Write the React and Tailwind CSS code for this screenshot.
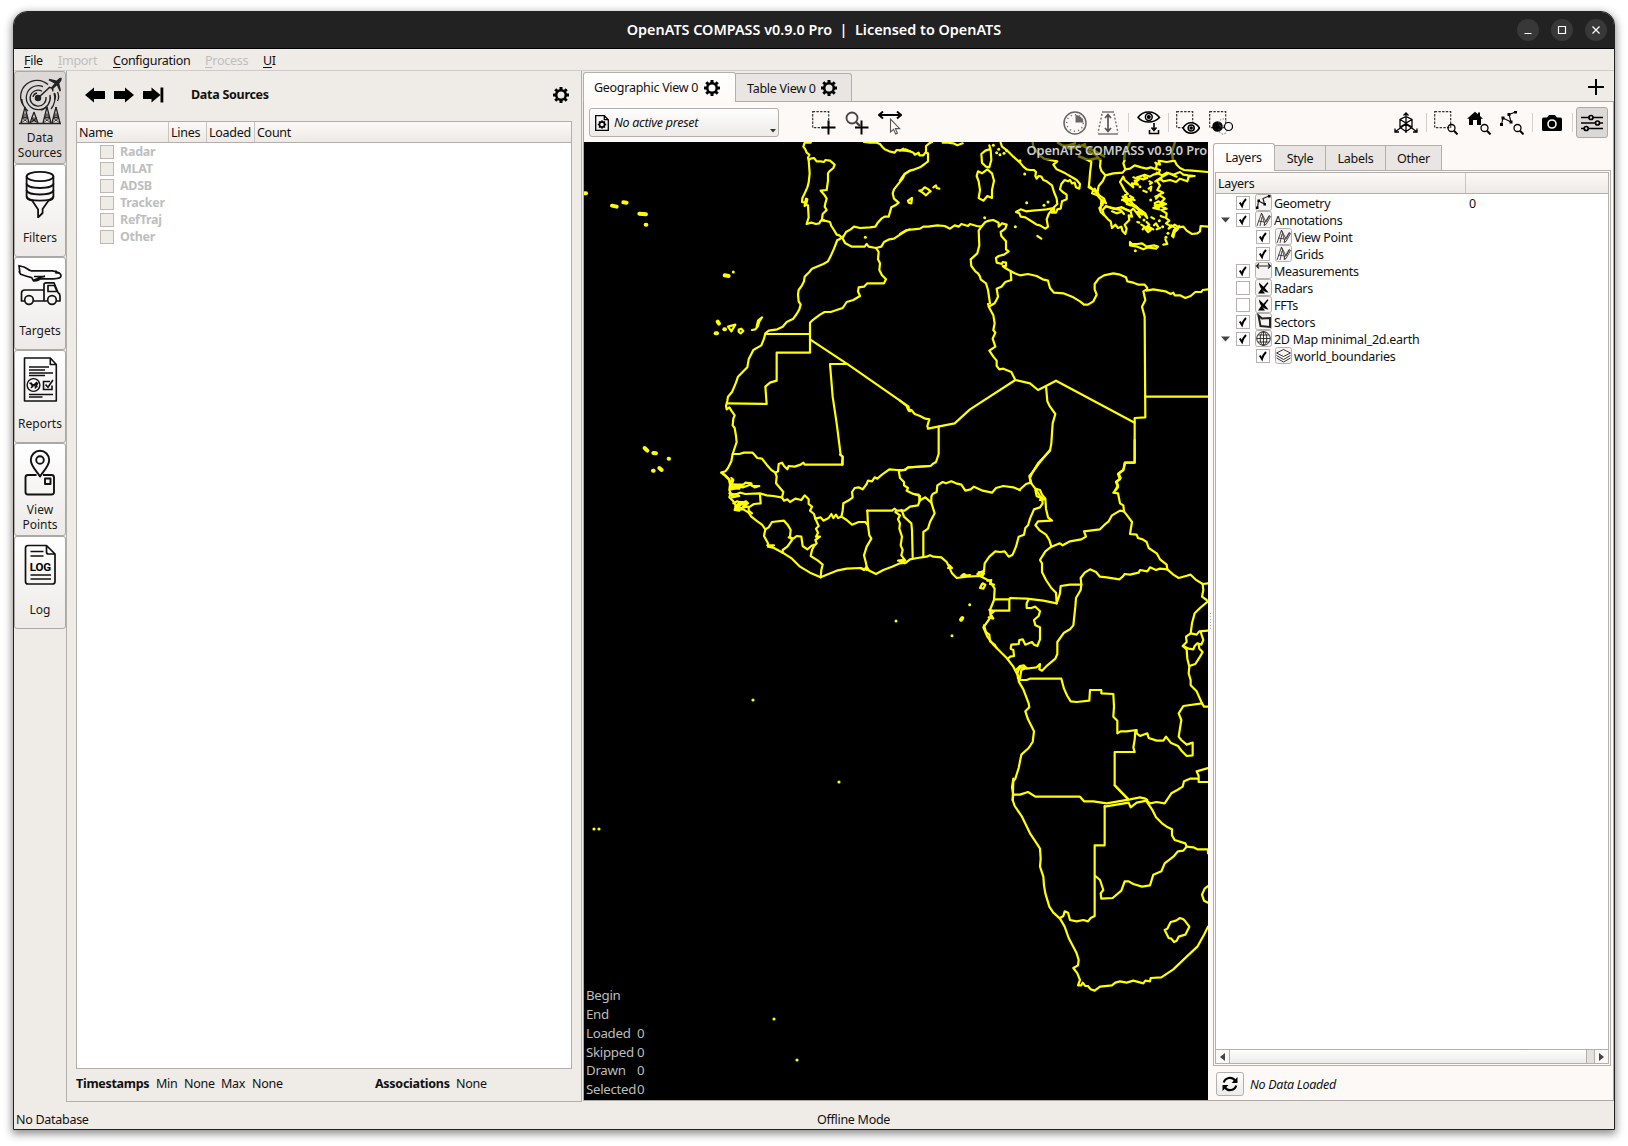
import React from "react";

function Gear({ className = "" }) {
  return (
    <svg viewBox="0 0 16 16" className={"h-4 w-4 shrink-0 " + className}>
      <circle cx="8" cy="8" r="4.8" fill="none" stroke="#000" strokeWidth="2.6" />
      <g stroke="#000" strokeWidth="3">
        <path d="M8 0v3M8 13v3M0 8h3M13 8h3" />
        <path d="M2.3 2.3l2 2M11.7 11.7l2 2M2.3 13.7l2-2M11.7 4.3l2-2" />
      </g>
    </svg>
  );
}

/* ---------- sidebar drawings, each on a 46x48 canvas ---------- */

const tower = (x, top) => (
  <g key={x}>
    <path d={`M${x} ${top}L${x - 4} 46M${x} ${top}L${x + 4} 46`} strokeWidth="1.3" />
    <path
      d={`M${x - 1.5} ${top + 6}L${x + 2.5} ${top + 10}L${x - 3} 41L${x + 4} 46M${x + 1.5} ${top + 6}L${x - 2.5} ${top + 10}L${x + 3} 41L${x - 4} 46M${x - 2} ${top + 9}H${x + 2}M${x - 3} 41H${x + 3}`}
      strokeWidth="0.8"
    />
  </g>
);

function SourcesIcon() {
  return (
    <svg viewBox="0 0 46 48" className="h-12 w-[46px]" fill="none" stroke="#222" strokeWidth="1.3">
      <circle cx="21" cy="21" r="2.6" fill="#222" />
      <path d="M21 21L33 10" strokeWidth="1.6" />
      <path d="M25 14.2A8 8 0 1 0 29 20M26 9.6A12 12 0 1 0 33 18c1 7-3 14-9 15M31 7.6A16.3 16.3 0 0 0 6 28M4.800 22A16.400 16.400 0 0 0 11 34M37 16a17 17 0 0 1-3 16M16 20a5 5 0 0 1 4-4" />
      <path d="M37.500 16c1.200 2 1.200 5 0 7M40.500 15c1.500 3 1.500 6 0 9" />
      <path d="M44.500 .8c-2-.8-4 2-5 2.800l-7-1.800-1 1.500 6 3.200-3 3.500-2.500-.3-.5 1 3 1 1 3 1-.5v-2.800l3.400-3 2.800 6.400 1.300-1.200-1.700-7.200c1-1 3-3.600 2.200-5.600z" fill="#222" stroke="none" />
      {tower(8, 30)}
      {tower(17, 35)}
      {tower(30, 30)}
      {tower(39, 30)}
      <path d="M2 46.500H44" strokeWidth="1.6" />
    </svg>
  );
}

function FunnelIcon() {
  return (
    <svg viewBox="0 0 46 48" className="h-12 w-[46px]" fill="none" stroke="#111" strokeWidth="1.8" strokeLinejoin="round">
      <ellipse cx="23" cy="6.500" rx="13.400" ry="4.700" />
      <path d="M9.600 6.500v20c0 2 2.500 3.500 5.500 4l6 9v8l4.500-4.500v-4l6-8.500c3-.5 4.800-2 4.800-4v-20" />
      <path d="M9.600 13.500c0 6 26.800 6 26.800 0M9.600 20c0 6 26.800 6 26.800 0M9.600 26.500c2 5.500 24.800 5.500 26.800 0" />
    </svg>
  );
}

function TargetsIcon() {
  return (
    <svg viewBox="0 0 46 48" className="h-12 w-[46px]" fill="none" stroke="#111" strokeWidth="1.700" strokeLinejoin="round">
      <path d="M5 3.500l-3-.8.800 5.800-.6.300 1.500 2.500c4 1.500 8 2.700 11 3.300l1.800 3.200c3 .3 5-.5 7-2h13c3 0 7.500-.5 7.500-3s-4-4.300-8.500-5H14c-3-.8-6-4.300-9-4.300z" />
      <path d="M16 17.500c3-1 7-4 12-4M19 17l9-4M39 7.500v2.500h4M17 13.500h10" />
      <path d="M8 38H4.500v-8c0-2 1.500-3 3.500-3h19v-5.500c0-1 1-1.700 2-1.700h8l4 9.700c1.500 1 2 2 2 3.500v5h-4M16 38h14M27 27v11M31 23v5.500h9l-2.500-6H31z" />
      <circle cx="12" cy="37" r="4.300" />
      <circle cx="35" cy="37" r="4.300" />
    </svg>
  );
}

function ReportIcon() {
  return (
    <svg viewBox="0 0 46 48" className="h-12 w-[46px]" fill="none" stroke="#111" strokeWidth="1.400">
      <path d="M7.500 2h25.800l6 6.500V45H7.500zM33.300 2v6.500h6" strokeWidth="1.600" strokeLinejoin="round" />
      <path d="M12 11h20M12 14h16M12 17h24M12 19.500h16M12 38.500h24M12 41h13.500" />
      <circle cx="16.500" cy="29" r="6.400" />
      <path d="M12.500 27l8 4M20 26l-6 6M14 26.500l1 3 5.500-2-2.500 5" strokeWidth="1.500" />
      <path d="M33 25.500h-6.500v8H35v-4M28.500 28.500l2.500 2.800L36 24" strokeWidth="1.600" />
    </svg>
  );
}

function ViewPointIcon() {
  return (
    <svg viewBox="0 0 46 48" className="h-12 w-[46px]" fill="none" stroke="#111" strokeWidth="1.900" strokeLinejoin="round">
      <path d="M19.500 26H11c-1.500 0-2.500 1-2.500 2.500V43c0 1.500 1 2.500 2.500 2.500h23.500c1.500 0 2.500-1 2.500-2.500V28.500c0-1.500-1-2.500-2.500-2.500H26" />
      <path d="M23 27.500c-2-4-9.200-10-9.200-16.500a9.200 9.200 0 0 1 18.400 0c0 6.500-7.200 12.500-9.200 16.500z" />
      <circle cx="23" cy="11" r="3.800" />
      <path d="M28 29.500h5.500v5.500H28z" />
    </svg>
  );
}

function LogIcon() {
  return (
    <svg viewBox="0 0 46 48" className="h-12 w-[46px]">
      <g fill="none" stroke="#111" strokeWidth="1.700" strokeLinejoin="round">
        <path d="M29.500 3.500H11c-1.500 0-2.500 1-2.500 2.500v33.500c0 1.500 1 2.500 2.500 2.500h24.500c1.500 0 2.500-1 2.500-2.500V12z M29.500 3.500V10c0 1.500.8 2 2 2H38" />
        <path d="M13.500 9.500h13M13.500 14h13M13.500 33h20.500M13.500 37h20.500" />
      </g>
      <text x="23.300" y="28.500" textAnchor="middle" fontFamily="Roboto, sans-serif" fontWeight="700" fontSize="11.500" letterSpacing="-0.100">
        LOG
      </text>
    </svg>
  );
}

const SIDE = [
  { label: ["Data", "Sources"], Icon: SourcesIcon, active: true },
  { label: ["Filters"], Icon: FunnelIcon },
  { label: ["Targets"], Icon: TargetsIcon },
  { label: ["Reports"], Icon: ReportIcon },
  { label: ["View", "Points"], Icon: ViewPointIcon },
  { label: ["Log"], Icon: LogIcon },
];

function Sidebar() {
  return (
    <nav className="w-[52px] shrink-0">
      {SIDE.map(({ label, Icon, active }) => (
        <button
          key={label[0]}
          className={
            "flex h-[93px] w-[52px] flex-col items-center rounded-[3px] border border-[#aca8a5] pt-[5px] text-[12px] leading-[15px] tracking-normal text-[#1a1a1a] " +
            (active ? "bg-[#dcd8d6]" : "bg-linear-to-b from-white to-[#edeae7]")
          }
        >
          <Icon />
          <span className="flex h-[34px] flex-col justify-center pt-[5px]">
            {label.map((l) => (
              <span key={l} className="block text-center">
                {l}
              </span>
            ))}
          </span>
        </button>
      ))}
    </nav>
  );
}

/* ---------- left panel ---------- */

const COLS = [
  ["Name", "w-[92px]"],
  ["Lines", "w-[38px]"],
  ["Loaded", "w-[48px]"],
];

function SourcesPanel() {
  return (
    <section className="flex w-[516px] shrink-0 flex-col border-x border-b border-[#b3afac] pr-[9px] pl-[9px]">
      <div className="flex h-[50px] items-center pb-[2px] pl-[9px]">
        <svg viewBox="0 0 80 16" className="h-4 w-20">
          <path d="M0 8l9-7.500V4h11v8H9v3.500zM49 8l-9-7.500V4H29v8h11v3.500zM58 4h8.500V.5L75.500 8l-9 7.500V12H58zM75.500.5H78.300v15h-2.800z" />
        </svg>
        <span className="ml-[26px] font-bold">Data Sources</span>
        <Gear className="mr-[3px] ml-auto" />
      </div>
      <div className="flex flex-1 flex-col border border-[#b3afac] bg-white">
        <div className="flex h-[21px] border-b border-[#b3afac] bg-linear-to-b from-[#fdf9f6] to-[#edeae6] leading-[21px]">
          {COLS.map(([c, w]) => (
            <div key={c} className={w + " border-r border-[#c9c5c2] pl-[2px]"}>
              {c}
            </div>
          ))}
          <div className="pl-[2px]">Count</div>
        </div>
        <div className="pl-[23px]">
          {["Radar", "MLAT", "ADSB", "Tracker", "RefTraj", "Other"].map((r) => (
            <div key={r} className="flex h-[17px] items-center font-bold text-[#bebebe]">
              <i className="mr-[6px] h-[14px] w-[14px] border border-[#bcb8b4] bg-[#efebe7]" />
              <span className="pt-[2px]">{r}</span>
            </div>
          ))}
        </div>
      </div>
      <div className="flex h-[32px] items-center pb-[1px] whitespace-nowrap">
        <b className="w-[80px]">Timestamps</b>
        <span className="w-[28px]">Min</span>
        <span className="w-[37px]">None</span>
        <span className="w-[31px]">Max</span>
        <span className="w-[123px]">None</span>
        <b className="w-[81px]">Associations</b>
        <span>None</span>
      </div>
    </section>
  );
}

/* ---------- toolbar ---------- */

function Tool({ children, className = "" }) {
  return (
    <svg viewBox="0 0 24 24" fill="none" stroke="#000" strokeWidth="1.500" className={"h-6 w-6 shrink-0 " + className}>
      {children}
    </svg>
  );
}
const Sep = ({ className }) => <i className={"h-[19px] w-px shrink-0 bg-[#d3cfcc] " + className} />;
const Dashed = ({ s = 16 }) => (
  <rect x=".7" y=".7" width={s} height={s} stroke="#333" strokeWidth="1.200" strokeDasharray="2.400 1.300" />
);
const Lens = () => (
  <g>
    <circle cx="17.500" cy="17" r="3.500" strokeWidth="1.300" />
    <path d="M20 19.700l3.500 3.700" strokeWidth="2" />
  </g>
);

function Toolbar() {
  return (
    <div className="flex h-10 items-center pt-px pl-[5px]">
      <div className="flex h-[29px] w-[190px] items-center rounded-[3px] border border-[#b3afac] bg-linear-to-b from-white to-[#edeae7] pl-[5px]">
        <svg viewBox="0 0 14 16" className="h-4 w-[14px]" fill="none" stroke="#000" strokeWidth="1.300">
          <path d="M.7.700h8.600l4 4v10.600H.7zM9.300.7v4h4" />
          <circle cx="7" cy="9.500" r="2.600" strokeWidth="1.700" />
          <path d="M7 5.300v1.500M7 12.200v1.500M2.800 9.500h1.500M9.700 9.500h1.500M4 6.500l1 1M9 11.500l1 1M4 12.500l1-1M9 7.500l1-1" />
        </svg>
        <span className="ml-[5px] pt-px italic">No active preset</span>
        <svg viewBox="0 0 6 4" className="mt-[17px] mr-[2px] ml-auto h-[4px] w-[6px]">
          <path d="M0 0h6L3 3.500z" fill="#333" />
        </svg>
      </div>

      <Tool className="ml-[33px]">
        <Dashed />
        <path d="M16.500 9.500v14M9.500 16.500h14" strokeWidth="2" />
      </Tool>
      <Tool className="ml-[9px]">
        <circle cx="7" cy="7" r="5.500" stroke="#444" strokeWidth="1.800" />
        <path d="M11 11l4 4" stroke="#444" strokeWidth="2.400" />
        <path d="M16.500 9.500v14M10 16.500h13.500" strokeWidth="2" />
      </Tool>
      <Tool className="ml-[9px]">
        <path d="M1 4h22M5 .5L1 4l4 3.500M19 .5L23 4l-4 3.500" strokeWidth="1.900" />
        <path d="M12.500 8v13l3-2.700 2.200 4.700 1.700-.8-2-4.600h4.300z" stroke="#555" strokeWidth="1.100" fill="#fdf9f6" />
      </Tool>

      <Tool className="ml-[161px]">
        <circle cx="12" cy="12" r="11" stroke="#666" />
        <path d="M12.500 11.500V4a8 8 0 0 1 8 7.500z" fill="#666" stroke="none" />
        <circle cx="12" cy="12" r="8.300" stroke="#777" strokeWidth="1.400" strokeDasharray="1.300 3" />
      </Tool>
      <Tool className="ml-[9px]">
        <path d="M6 1h12M2 23h20" stroke="#777" />
        <path d="M6 3L2 22M18 3l4 19" stroke="#777" strokeDasharray="2 1.800" />
        <path d="M12 3v18M9 7l3-3.500L15 7M9 17l3 3.500 3-3.500" stroke="#555" strokeWidth="1.700" />
      </Tool>
      <Sep className="ml-[8px]" />
      <Tool className="ml-[8px]">
        <path d="M1 6.500C6-1 17-1 22.500 6.500 17 12.500 6 12.500 1 6.500z" strokeWidth="1.500" />
        <circle cx="11.800" cy="6" r="3.400" strokeWidth="1.500" />
        <circle cx="11.800" cy="6" r="1.300" fill="#000" />
        <path d="M17 12v7M14.500 16.500l2.500 3 2.500-3M12.500 19v3.500h9V19" strokeWidth="1.600" />
      </Tool>
      <Sep className="ml-[7px]" />
      <Tool className="ml-[7px]">
        <Dashed />
        <path d="M7 17c4-7 12-7 16.500 0-4.500 7-12.500 7-16.500 0z" fill="#fdf9f6" strokeWidth="1.600" />
        <circle cx="15.200" cy="17" r="3" strokeWidth="1.600" />
        <circle cx="15.200" cy="17" r="1" fill="#000" />
      </Tool>
      <Tool className="ml-[9px]">
        <Dashed />
        <circle cx="8.500" cy="15.500" r="4.500" fill="#000" />
        <circle cx="14" cy="19" r="4" stroke="#555" strokeWidth="1" strokeDasharray="1.500 1.500" />
        <circle cx="14" cy="12" r="4" stroke="#777" strokeWidth="1" strokeDasharray="1.500 1.500" />
        <circle cx="19.500" cy="15.500" r="4" fill="#fdf9f6" strokeWidth="1.200" />
      </Tool>

      <Tool className="ml-[161px]">
        <path d="M12 2v20M6 8.500v8l6 4 6-4v-8l-6-3zM6 8.500l6 3.500 6-3.500M6 16l6-3.500 6 3.500M1.500 20.500L12 13l10.500 7.500M1 17.500v3.500h4M23 17.500v3.500h-4M9.500 4.500L12 2l2.500 2.500" strokeWidth="1.300" />
      </Tool>
      <Sep className="ml-[8px]" />
      <Tool className="ml-[7px]">
        <Dashed />
        <Lens />
      </Tool>
      <Tool className="ml-[9px]">
        <path d="M8 .8L0 7.800h2V14h4V9h4v5h4V7.800h2L13 5V1.500h-2V3.200z" fill="#000" stroke="none" />
        <Lens />
      </Tool>
      <Tool className="ml-[9px]">
        <path d="M1.500 13.500L3 7l8 4L9 3.500 15.500 1" strokeWidth="1.100" />
        <path d="M0 12h3v3H0zM1.500 5.500h3v3h-3zM9.500 9.500h3v3h-3zM7.500 2h3v3h-3zM14 0h3v2.500h-3z" fill="#000" stroke="none" />
        <Lens />
      </Tool>
      <Sep className="ml-[8px]" />
      <svg viewBox="0 0 20 16" className="ml-[9px] h-4 w-5 shrink-0">
        <path d="M1.500 2.500H5L7 0h6l2 2.500h3.500A1.500 1.500 0 0 1 20 4v10.500a1.500 1.500 0 0 1-1.500 1.500h-17A1.500 1.500 0 0 1 0 14.500V4a1.500 1.500 0 0 1 1.500-1.500z" />
        <circle cx="10" cy="9" r="4" fill="none" stroke="#fdf9f6" strokeWidth="1.600" />
      </svg>
      <Sep className="ml-[10px]" />
      <div className="ml-[3px] flex h-[31px] w-[32px] items-center justify-center rounded-[3px] border border-[#aca8a5] bg-[#dcd8d6]">
        <svg viewBox="0 0 22 18" className="h-[18px] w-[22px]" fill="none" stroke="#000" strokeWidth="1.700">
          <path d="M0 3.500h8M12 3.500h10M0 9h14M18.500 9H22M0 14.500h3M7.500 14.500H22" />
          <circle cx="10" cy="3.500" r="2" />
          <circle cx="16.500" cy="9" r="2" />
          <circle cx="5.200" cy="14.500" r="2" />
        </svg>
      </div>
    </div>
  );
}

/* ---------- map: line work is stored in thirds of a pixel, one group per sheet ---------- */

const SHEETS = [
  {
    x: 570,
    y: 130,
    lines: [
      "722,38 704,38 700,50 706,58 710,68 718,74 714,84 716,90 719,130 716,158 712,172 704,190 697,205 696,216 706,218 704,228 708,206 712,208 708,225 714,226 716,262 710,282 724,278 738,282 748,280 752,272 764,272 780,276 784,288 792,300 800,314 808,316 818,324 828,306 842,298 852,290 870,294 900,292 916,290 922,280 934,266 944,260 956,260 964,232 976,226 986,218 972,206 968,190 972,178 988,158 998,146 1004,132 1020,122",
      "716,90 722,86 732,84 740,94 752,94 762,96 766,90 780,92 794,104 790,114 778,124 774,130 774,152 770,180 752,182 764,196 770,206 766,220 764,230 770,240 758,252 756,268 764,272",
      "882,36 900,38 920,38 930,42 938,52 944,58 958,64 974,68 980,60 1002,62 1006,58 1020,64",
      "818,320 808,328 802,330 792,356 784,374 774,394 760,402 726,416 718,426 704,440 702,454 696,466 686,480 684,494 686,514 692,524 688,538 680,552 670,566 650,576 638,590 622,598 596,602 586,610 582,626 574,646 550,660 544,672 536,688 532,712 520,724 504,740 498,758 492,772 486,786 474,800 472,812 468,828 470,838 478,832 484,842 494,856 490,866 488,886 494,894 498,918 500,936 492,960 488,972 484,994 474,1014 466,1024 454,1028 464,1034 478,1048 480,1060 488,1048",
      "818,326 826,340 846,350 866,350 884,350 890,342 896,350 918,354 934,350 942,336 958,328 972,326 990,314 1006,304 1020,298",
      "918,354 926,366 924,388 930,400 928,420 936,436 948,448 942,460 892,460 882,470 866,472 864,484 870,498 850,510 830,516 818,534 800,540 782,546 764,546 750,554 726,572 720,578 720,668 620,668 620,752 600,758 586,770 590,822 472,820",
      "586,612 720,612",
      "720,628 838,706 1016,830 1016,842 1020,844",
      "832,702 780,702 788,800 800,880 812,974 818,980 816,1004",
      "474,590 496,584 484,604 474,590",
      "506,599 514,596 520,603 512,610 506,605 506,599",
      "546,600 556,598 564,588 568,574 576,562 564,572 560,590",
    ],
    blobs: [
      "464,436 476,438",
      "126,227 140,230",
      "160,217 170,218",
      "208,251 228,253",
      "224,954 232,962",
      "250,969 258,970",
      "268,1014 275,1020",
      "443,575 447,581",
      "296,986 297,986",
      "249,1022 251,1022",
      "44,190 48,190",
      "227,284 229,284",
      "437,610 441,610",
      "463,598 465,598",
    ],
    dots: [[490, 426], [886, 322]],
  },
  {
    x: 900,
    y: 130,
    lines: [
      "0,152 6,142 14,132 30,122 44,118 60,112 74,102 84,94 84,70 78,68 78,48 88,40 96,36",
      "0,62 10,56 16,62 30,64 40,68 44,74 56,68 58,76 70,76 76,68",
      "128,38 144,38 160,40 172,46 188,40",
      "58,182 66,180 74,172 82,176 92,184 86,188 78,196 68,188 58,182",
      "100,172 108,166 110,174 118,176",
      "24,212 36,204 34,220 26,218 24,212",
      "268,46 272,60 274,90 268,112 258,110 246,98 244,72 256,62 268,58",
      "234,124 246,130 262,118 276,130 282,152 276,180 276,204 262,198 250,212 236,204 240,180 236,154 230,138 234,124",
      "302,38 306,50 322,62 340,80 360,98 370,110 380,118 390,120 402,120 408,126 406,138 410,146 416,138 424,140 430,150 440,154 456,166 462,186 470,206 472,222 462,232 462,242 456,248 468,248 472,238 482,236 486,214 500,208 500,194 488,186 480,178 484,162 494,150 504,154 510,150 516,160 524,158 528,172 538,176 540,162 530,150 520,144 496,130 480,122 470,118 460,104 472,94 432,86 424,80 410,64 400,50 398,38",
      "348,246 362,238 378,244 398,242 420,240 440,238 460,234 446,252 440,268 444,290 436,296 420,286 410,284 398,276 376,262 362,260 358,250 348,246",
      "412,318 424,326",
      "0,312 20,300 40,298 60,296 70,290 84,290 112,286 134,288 150,296 164,286 176,290 184,282 204,288 210,282 230,288 244,290 256,276 268,272 280,270 296,278 296,290 306,280 320,284 316,296 302,306 304,318 318,334 318,358 326,364 312,374 296,378 288,384 290,398 306,402 308,396 318,398 318,408 308,408 316,414 326,420 344,430 360,436 384,432 410,438 428,448 444,452 450,474 462,488 490,490 520,502 540,514 552,524 564,524 580,514 590,494 584,478 584,462 596,446 612,436 640,430 660,434 678,442 682,454 700,458 716,464 734,464 742,474 740,482 760,478 796,484 812,492 820,488 824,496 840,496 856,504 872,498 886,486 904,486 908,480 924,478",
      "244,290 236,302 238,346 232,370 212,388 214,408 226,424 234,430 240,440 242,448 258,460 264,480 270,520",
      "332,426 334,450 316,456 304,470 290,476 294,500 284,520 266,530",
      "264,522 268,534 280,556 284,580 280,600 286,608 278,626 286,650 268,662 280,680 290,692 290,708 298,718 310,716 334,726 346,750 390,760 414,780 438,768 468,752 704,878 704,998 676,998 670,1020 656,1030 662,1044 650,1054 654,1066 646,1080",
      "346,750 210,838 164,880 114,890 84,896 82,888 88,868 76,866 60,858 44,852 34,840 24,838 20,828 0,812",
      "116,890 116,972 108,996 98,1002 92,1008 24,1012 16,1020 0,1022",
      "438,768 442,814 450,830 466,852 458,880 454,940 450,962 414,1000 396,1030 390,1044 394,1060",
      "740,478 730,484 736,510 726,530 734,560 736,862 704,864 704,878",
      "736,800 924,800",
      "566,92 574,96 570,130 568,156 566,172 580,180 576,190 592,196 602,208 610,212 608,224 598,234 602,246 612,256 608,240 618,228 640,236 662,240 672,252",
      "570,170 590,190 584,176 598,196 612,206 618,220 604,212 602,240",
      "612,254 624,268 632,274 636,294 646,284 654,294 664,290 668,304 676,312 680,296 674,284 688,270 686,256 696,260 692,244 676,238 664,232 646,236 620,230",
      "664,232 690,244 700,236 720,262 712,246 726,254 716,240 700,224 690,214 676,206 666,210 680,202 674,196 684,192 676,184 668,170 660,156 670,140 674,150 688,162 700,172 696,160 714,164 704,152 716,150 712,142 734,134 750,140 760,134 776,130 780,120 766,116",
      "602,88 600,110 604,122 616,136 640,130 668,128 676,118 670,100 674,90",
      "616,136 608,154 596,168 592,190",
      "676,118 690,116 704,106 724,112 740,116 752,112 768,118 770,104 766,98 780,104 776,92 800,96 824,92 830,104 840,114 852,120 876,122 924,126",
      "770,128 786,136 800,128 820,134 840,126 850,134 864,136 884,138 866,140 862,154 840,146 828,156 810,150 790,154 780,146 766,154 784,142 806,130 830,140",
      "784,146 770,152 780,166 772,180 790,188 776,194 794,206 784,216 798,222 782,228 800,236 784,240 800,250 798,264 808,272 798,280 812,288 806,296 824,284 836,292 850,290 860,302 876,312 892,310 900,304 902,288 924,290",
      "764,220 776,214 788,224 776,232 764,226 780,224 760,234 778,238",
      "672,212 690,208 698,222 710,230 724,244 742,264 736,250 716,236 704,230 684,220 672,212",
      "690,198 700,204 688,208 704,210",
      "668,200 684,206 680,222 692,226",
      "740,276 748,284 738,292 752,300 744,306 734,294 746,290 760,298",
      "690,336 696,342 712,342 726,340 740,350 762,346 774,350 768,356 744,352 730,358 712,350 690,346 690,336",
      "790,344 802,342 796,328",
      "820,322 824,306 834,296 822,300 816,318",
      "814,286 832,298 820,310 838,288",
      "712,142 730,148 742,144 732,140",
      "700,142 716,148 704,160",
      "746,176 754,170 752,182",
      "768,206 778,196 766,200",
      "730,182 740,186",
      "724,284 734,290 728,298",
      "762,286 768,280 774,290",
      "770,298 780,294",
      "754,262 762,266",
      "712,276 718,278",
      "748,154 756,158 750,162",
      "782,258 792,262",
      "636,244 650,250 662,246",
    ],
    blobs: [],
    dots: [
      [346, 290], [254, 263], [374, 132], [380, 218], [432, 226], [444, 216], [280, 46], [296, 58], [312, 70], [320, 62], [290, 68], [300, 74], [360, 92], [706, 362],
      [752, 210], [778, 272], [804, 310], [798, 322], [720, 170], [732, 270], [788, 290],
    ],
  },
  {
    x: 700,
    y: 440,
    lines: [
      "64,98 76,108 88,120 90,134 88,150 92,160 88,172 100,184 106,194 110,208 130,208 146,218 154,230 172,244 186,254 196,268 192,288 204,310 204,320 222,324 248,338 276,356 300,380 330,398 362,412 380,404 410,392 440,386 480,384 504,390 528,402 550,390 576,380 600,370 618,368 630,358 652,354 680,350 690,346 700,350 724,352 740,366 748,382 756,400 770,414 800,410 840,408 856,416 870,424 884,446 882,480 870,510 872,530 866,540 850,562 862,590 880,614 920,654 940,680 950,700 958,712",
      "90,132 110,134 130,134 136,128 154,130 156,138 178,138 164,142 150,134 130,142 112,140 118,146 96,144 112,136 126,138",
      "92,148 114,144 104,138 92,142 100,120 94,114",
      "88,160 104,164 120,158 136,162 180,160 200,166 220,168 244,172",
      "92,166 108,162 118,168 96,172",
      "180,164 182,190 162,192 146,202 146,212 156,220",
      "100,190 112,184 124,190 138,184 144,190 130,198 144,200 124,204 108,196 104,210 118,212 112,200 130,190 106,200 120,186 140,186 126,206",
      "98,42 118,42 132,38 158,38 172,54 186,56 200,74 214,90 226,98 230,110 228,130 240,144 250,156 246,172 252,182 262,178 270,186 286,176 304,180 314,166 326,178 326,192 336,200 330,212 342,222 346,236 356,258 348,266 354,278 348,290 360,290 346,300 350,310 342,318 336,330 332,348 354,362 368,374 364,390 362,412",
      "226,98 234,94 236,72 246,68 252,78 262,88 266,78 284,80 302,74 310,68 314,74 428,74 428,50 420,44",
      "196,268 206,262 216,246 252,242 264,256 272,270 270,290 276,300 262,320 248,330 248,338",
      "266,292 280,296 290,288 304,290 308,318 322,328 334,318 342,314",
      "346,236 362,232 370,242 386,234 394,222 400,234 408,224 414,234 424,230 428,212 430,190 448,180 458,172 456,156 464,144 476,142 488,148 500,132 504,122 516,124 524,112 532,116 546,104 568,88 592,90 612,90 626,82 690,78",
      "424,230 440,240 456,254 476,246 496,246 504,256 508,286 514,296 500,320 492,346 498,370 502,390",
      "502,212 504,256",
      "502,212 576,212 584,206 590,212 614,212 630,200 654,196 660,180 656,164 640,162 620,152 624,144 612,136 612,126 600,114 596,92",
      "586,216 600,226 594,238 600,250 598,266 606,290 602,316 608,330 604,346 616,362",
      "604,210 608,218 612,230 634,250 636,270 638,352",
      "642,162 660,168 658,182 676,172 694,188 704,220 690,246 684,266 670,276 670,350",
      "694,188 694,170 698,162 710,156 712,136 728,126 738,130 754,124 768,130 784,134 796,152 812,148 822,140 848,152 876,158 888,144 910,138 940,142 960,150",
      "748,376 756,384 744,384",
      "784,408 792,402 800,407 810,405 790,409",
      "836,396 852,400 846,410 832,402 848,394",
      "862,422 874,420 870,432 882,434",
      "842,440 848,430 856,434 850,446 840,444 846,432",
      "868,510 882,514 872,522 880,536 866,532",
      "482,384 492,390 500,380 506,390",
      "594,362 608,360 614,370 600,364",
      "852,556 858,576 868,584 870,604 884,614 890,624",
      "202,316 222,316 208,320",
    ],
    blobs: ["783,539 787,534"],
    dots: [[588, 543], [809, 494], [756, 587]],
  },
  {
    x: 960,
    y: 440,
    lines: [
      "178,150 198,132 212,128",
      "270,30 240,66 218,96 208,108 212,128 226,146 240,150 246,164 256,176 258,206 264,232 276,242 234,244 226,256 240,272 258,284 268,300 274,320",
      "226,150 230,168 246,176 248,190 240,202 222,208 210,236 204,256 196,264 192,284 176,290 168,320 158,344 146,350 134,334 120,336 106,334 88,350 74,370 72,394 64,404",
      "230,152 240,168 252,178 240,180",
      "274,320 300,310 308,316 330,304 364,298 378,290 372,274 390,272 420,268 436,252 446,244 456,226 480,212 492,214",
      "524,0 524,68 494,68 490,90 474,102 480,118 468,126 474,142 460,158 474,160 480,190 490,196 492,214 504,230 516,246 510,282 530,284 534,294 548,298 560,306 566,324 590,340 600,358 620,374 622,388 640,404 656,414 678,408 692,404 706,418 728,432 744,430",
      "622,388 600,386 588,390 570,382 562,394 540,390 536,398 510,404 494,402 488,410 478,418 440,412 420,410 408,396 390,388 374,398 362,414 364,434 330,434 302,438 300,460 290,490 288,458 274,444 258,420 246,396 246,370 240,360 256,334 274,320",
      "102,478 148,478 150,474 200,476 250,482 290,490",
      "148,478 148,512 92,512",
      "206,478 200,490 200,504 214,504 226,500 240,514 236,528 222,540 226,556 240,562 240,598 232,618 222,614 216,606 196,614 188,598 178,600 176,612 154,614 152,626 160,630 162,648 150,650 144,656",
      "364,434 362,450 348,474 346,500 340,556 330,568 312,578 292,606 292,642 286,656 262,676 246,692 238,688 240,672 230,682 214,684 200,686 192,676 180,678 168,690",
      "200,684 184,690 180,716",
      "196,682 178,684 172,700 174,716",
      "176,720 200,720 210,716 304,716 312,746 322,768 332,784 350,786 388,782 390,750 424,750 424,760 460,762 462,800 460,830 472,842 472,880 482,874 500,874 530,870 530,880 540,888 562,880 566,894 590,902 610,902 618,890 632,908 654,918 666,934 680,948 698,946 698,908 680,914 664,900 656,890 664,840 656,820 670,798 726,790",
      "178,712 176,724 190,748 206,790 208,802 196,814 204,838 222,874 218,906 206,924 184,944 180,964 176,984 166,1016 160,1024 158,1080",
      "744,484 720,504 704,520 696,550 692,580 678,590 680,606 668,618 680,628 682,656 688,680 686,700 692,720 692,736 710,754 726,790 732,800 744,800",
      "728,432 730,450 726,470 740,480",
      "692,580 710,584 718,574 744,572",
      "722,576 730,600 724,614 712,610 704,618 700,628 686,626 670,618",
      "716,614 718,626 728,636 720,650 706,672 688,678",
      "526,872 524,900 520,922 524,936 464,936 464,1036 504,1078",
    ],
    blobs: [],
    dots: [],
  },
  {
    x: 960,
    y: 700,
    lines: [
      "160,236 156,262 160,284 158,300 164,318 186,350 210,400 230,430 240,446 242,476 240,500 250,530 252,556 256,580 268,620 280,638 300,656 314,680 326,714 350,760 356,780 354,796 340,804 352,820 360,840 354,856 364,856 368,848 376,858 384,858 392,868 404,872 420,860 456,856 466,848 480,844 500,848 520,842 550,850 556,842 570,844 572,834 604,832 640,808 680,770 712,740 732,704 744,680",
      "160,284 180,284 204,276 226,290 360,290 372,304 400,304 440,310 510,298 540,292 556,296 562,300",
      "434,320 470,314 506,308 512,322 530,308 560,302 570,310 590,306 614,310 634,280 652,270 668,260 672,244 690,236 714,236",
      "464,256 504,296",
      "434,318 434,436 404,436 404,648 392,654 384,664 370,660 350,664 330,660 324,638 314,634 310,648 300,654",
      "406,528 420,540 430,570 422,580 424,596 458,594 484,572 494,544 506,544 520,552 546,560 570,556 580,524 604,514 614,490 640,470 654,454 670,452 680,440 676,430 644,420 636,406 636,388 620,380 606,370 588,352 576,328 558,302",
      "680,440 700,442 712,448 744,448 744,460",
      "744,204 710,214 716,228 716,246 744,246",
      "744,558 734,566 726,584 732,602 744,608",
      "614,690 622,686 632,666 648,662 660,654 670,658 676,664 688,680 676,704 656,710 650,722 642,726 634,716 626,714 614,690",
    ],
    blobs: [],
    dots: [],
  },
];

const ATOLLS = [[753, 700], [839, 782], [594, 829], [599, 829], [774, 1019], [797, 1060]];

const STATS = [["Begin", ""], ["End", ""], ["Loaded", "0"], ["Skipped", "0"], ["Drawn", "0"], ["Selected", "0"]];

function MapView() {
  return (
    <div className="relative h-[958px] w-[624px] shrink-0 overflow-hidden bg-black">
      <svg viewBox="584 142 624 958" className="block h-[958px] w-[624px]">
        {SHEETS.map((s) => (
          <g
            key={`${s.x}-${s.y}`}
            transform={`translate(${s.x} ${s.y}) scale(0.33333)`}
            fill="none"
            stroke="#ffff00"
            strokeWidth="6.600"
            strokeLinejoin="round"
            strokeLinecap="round"
          >
            {s.lines.map((p) => (
              <polyline key={p} points={p} />
            ))}
            {s.blobs.map((p) => (
              <polyline key={p} points={p} strokeWidth="12" />
            ))}
            {s.dots.map(([x, y]) => (
              <circle key={`${x}-${y}`} cx={x} cy={y} r="4.500" fill="#ffff00" stroke="none" />
            ))}
          </g>
        ))}
        {ATOLLS.map(([x, y]) => (
          <circle key={x} cx={x} cy={y} r="1.600" fill="#ffff00" />
        ))}
        <path d="M1057 142l6 4 8-1 7 2 8-3M1078 156l10 4 10-2M1100 160l-4-5-8-4M1124 160l1-8 3-5 2-5M1173 160l-1-8 3-10M1083 146l12 5 10 6M1060 144l10 5 10-4M1064 147l12-4" fill="none" stroke="#ffff00" strokeWidth="2.500" />
      </svg>
      <div className="absolute top-0 right-0 h-[18px] w-[183px] bg-black/55 pr-px text-right text-[12.800px] leading-[17px] font-semibold tracking-[-0.080px] whitespace-nowrap text-[#cccccc]">
        OpenATS COMPASS v0.9.0 Pro
      </div>
      <div className="absolute bottom-[1px] left-[2px] text-[13.300px] leading-[18.800px] tracking-[-0.300px] text-[#bdbdbd]">
        {STATS.map(([k, v]) => (
          <div key={k} className="flex">
            <span className="w-[51px]">{k}</span>
            <span>{v}</span>
          </div>
        ))}
      </div>
    </div>
  );
}

/* ---------- layers panel ---------- */

const LI = {
  geometry: (
    <g>
      <path d="M2.500 13.500l1-6.500 6 3-1.500-5.500 6-2.500" strokeWidth="1.200" />
      <path d="M1 12.500h2.500V15H1zM2.500 5.500H5V8H2.500zM8.500 9H11v2.500H8.500zM13 1h2.500v2.500H13z" fill="#000" stroke="none" />
    </g>
  ),
  notes: <path d="M2 15L6.500 2l3.500 12M5 15l2-9M3.500 10l6 1M9.500 12.500l4.500-8 1.500 1L11 13.500l-2 1zM7 3l3.500 7M11 11l3.500-6" strokeWidth=".8" />,
  measure: <path d="M1.500 4h14M4 1.500L1.500 4 4 6.500M13 1.500L15.500 4 13 6.500" strokeWidth="1.200" />,
  radar: (
    <g fill="#000" stroke="none">
      <path d="M4 3.500c0 5 4 9.500 9.500 10l-3.700-4.500L13.500 4l-1-.8-4 4.500z" />
      <path d="M3 14.500l3.500-5 3.500 5z" />
    </g>
  ),
  sector: <path d="M3.500 2.500l3.500 3 8-.5v9l-9.500-1z" strokeWidth="2" />,
  globe: (
    <g strokeWidth=".9">
      <circle cx="8.500" cy="8.500" r="6.800" />
      <ellipse cx="8.500" cy="8.500" rx="3.300" ry="6.800" />
      <path d="M1.700 8.500h13.600M8.500 1.700v13.600M3 5h11M3 12h11" />
    </g>
  ),
  stack: <path d="M1.500 6L8.500 2.500 15.500 6 8.500 9.500zM1.500 8.500L8.500 12.500 15.500 8.500M1.500 11L8.500 15 15.500 11" strokeWidth=".9" />,
};

const ROWS = [
  ["Geometry", "geometry", true, 0, false, "0"],
  ["Annotations", "notes", true, 0, true],
  ["View Point", "notes", true, 1],
  ["Grids", "notes", true, 1],
  ["Measurements", "measure", true, 0],
  ["Radars", "radar", false, 0],
  ["FFTs", "radar", false, 0],
  ["Sectors", "sector", true, 0],
  ["2D Map minimal_2d.earth", "globe", true, 0, true],
  ["world_boundaries", "stack", true, 1],
];

function LayerRow({ row }) {
  const [label, icon, checked, depth, open, value] = row;
  return (
    <div className="flex h-[17px] items-center">
      <span className={"flex w-[250px] items-center " + (depth ? "pl-[40px]" : "pl-[5px]")}>
        {!depth && (
          <svg viewBox="0 0 10 6" className="mr-[5px] h-[6px] w-[10px]">
            {open && <path d="M0 .5h9L4.500 5.500z" fill="#444" />}
          </svg>
        )}
        <svg viewBox="0 0 14 14" className="h-[14px] w-[14px] shrink-0">
          <rect x=".5" y=".5" width="13" height="13" fill="#fff" stroke="#b5b1ae" />
          {checked && <path d="M3.800 6.500l2.200 3.500c.8-3 2-5 4-7" fill="none" stroke="#000" strokeWidth="2" />}
        </svg>
        <svg viewBox="0 0 17 17" className="ml-[5px] h-[17px] w-[17px] shrink-0" fill="none" stroke="#222">
          <rect x=".5" y=".5" width="16" height="16" rx="2" fill="#f6f4f2" stroke="#b5b1ae" />
          {LI[icon]}
        </svg>
        <span className="ml-[2px] pt-[2px] leading-[15px] whitespace-nowrap">{label}</span>
      </span>
      <span className="pt-[2px] pl-[3px] leading-[15px]">{value}</span>
    </div>
  );
}

function LayersPanel() {
  return (
    <aside className="flex w-[398px] shrink-0 flex-col pt-[1px]">
      <div className="flex h-[27px] items-end">
        <div className="z-10 -mb-px flex h-[28px] w-[62px] items-center justify-center rounded-t-[3px] border border-b-0 border-[#b3afac] bg-linear-to-b from-white to-[#fdf9f6] pt-[2px] pr-px">
          Layers
        </div>
        {[["Style", "w-[51px]"], ["Labels", "w-[60px]"], ["Other", "w-[56px]"]].map(([t, w]) => (
          <div key={t} className={w + " flex h-[25px] items-center justify-center border-t border-r border-[#b3afac] bg-[#e9e5e2] pt-[2px]"}>
            {t}
          </div>
        ))}
      </div>
      <div className="flex h-[896px] flex-col border border-[#b3afac] p-px">
        <div className="flex flex-1 flex-col border border-[#b3afac] bg-white">
          <div className="flex h-[21px] border-b border-[#b3afac] bg-linear-to-b from-[#fdf9f6] to-[#edeae6] leading-[22px]">
            <div className="w-[250px] border-r border-[#c9c5c2] pl-[2px]">Layers</div>
          </div>
          <div className="flex-1">
            {ROWS.map((r) => (
              <LayerRow key={r[0]} row={r} />
            ))}
          </div>
          <div className="flex h-[14px] border-t border-[#b3afac] bg-[#e3e0dd]">
            <div className="flex w-[14px] items-center justify-center border-r border-[#b3afac] bg-[#faf8f6]">
              <svg viewBox="0 0 5 8" className="h-2 w-[5px]"><path d="M5 0v8L0 4z" fill="#444" /></svg>
            </div>
            <div className="flex-1 border-r border-[#b3afac] bg-linear-to-b from-white to-[#edeae7]" />
            <div className="ml-[7px] flex w-[14px] items-center justify-center border-l border-[#b3afac] bg-[#faf8f6]">
              <svg viewBox="0 0 5 8" className="h-2 w-[5px]"><path d="M0 0v8l5-4z" fill="#444" /></svg>
            </div>
          </div>
        </div>
      </div>
      <div className="mt-[6px] flex items-center pl-[3px]">
        <div className="flex h-6 w-7 items-center justify-center rounded-[3px] border border-[#b3afac] bg-linear-to-b from-white to-[#edeae7]">
          <svg viewBox="0 0 16 16" className="h-4 w-4" fill="none" stroke="#000" strokeWidth="2.200">
            <path d="M1.800 6.500A6.300 6.300 0 0 1 13 4.500M14.200 9.500A6.300 6.300 0 0 1 3 11.500" />
            <path d="M15.500 1v6h-6zM.5 15V9h6z" fill="#000" stroke="none" />
          </svg>
        </div>
        <span className="ml-[6px] pt-[2px] italic">No Data Loaded</span>
      </div>
    </aside>
  );
}

function Views() {
  return (
    <section className="flex flex-1 flex-col pl-px">
      <div className="flex h-[31px] items-end border-b border-[#aca8a5] pt-px">
        <div className="z-10 -mb-px flex h-[30px] w-[153px] items-center rounded-t-[3px] border border-b-0 border-[#b3afac] bg-linear-to-b from-white to-[#fdf9f6] pl-[10px] whitespace-nowrap">
          <span className="pt-px">Geographic View 0</span>
          <Gear className="ml-[6px]" />
        </div>
        <div className="flex h-[28px] w-[116px] items-center rounded-tr-[3px] border-t border-r border-[#b3afac] bg-[#e9e5e2] pl-[11px] whitespace-nowrap">
          <span className="pt-[3px]">Table View 0</span>
          <Gear className="ml-[5px]" />
        </div>
        <svg viewBox="0 0 16 16" className="mr-[10px] mb-[6px] ml-auto h-4 w-4">
          <path d="M8 0v16M0 8h16" stroke="#000" strokeWidth="2" />
        </svg>
      </div>
      <div className="h-[999px] border-x border-b border-[#aca8a5] bg-[#fdf9f6]">
        <Toolbar />
        <div className="flex h-[958px]">
          <MapView />
          <div className="flex w-[5px] flex-col items-center justify-center gap-[2px]">
            {[0, 1, 2, 3, 4, 5].map((i) => (
              <i key={i} className="h-px w-px bg-[#b3afac]" />
            ))}
          </div>
          <LayersPanel />
        </div>
      </div>
    </section>
  );
}

const MENU = [
  ["F", "ile", "w-[34px]"],
  ["I", "mport", "w-[55px] text-[#bebebe]"],
  ["C", "onfiguration", "w-[92px]"],
  ["P", "rocess", "w-[58px] text-[#bebebe]"],
  ["U", "I", ""],
];

export default function App() {
  return (
    <div className="h-[1146px] w-[1628px] overflow-hidden bg-white pt-[11px] pl-[13px] font-['Noto_Sans',sans-serif] text-[12.500px] tracking-[-0.280px] text-[#111] select-none">
      <div className="flex h-[1119px] w-[1602px] flex-col overflow-hidden rounded-t-[14px] border border-[#222] bg-[#efebe7] shadow-[0_3px_9px_1px_rgba(0,0,0,0.45)]">
        <header className="flex h-[37px] shrink-0 items-center border-b border-black bg-[#222] text-white">
          <div className="w-[227px]" />
          <div className="flex-1 text-center text-[14.400px] leading-[20px] font-semibold tracking-normal whitespace-pre">OpenATS COMPASS v0.9.0 Pro  |  Licensed to OpenATS</div>
          <div className="flex w-[227px] justify-end gap-[12px] pr-[7px]">
            {["M7.500 14.500h7", "M7.500 7.500h7v7h-7z", "M7.500 7.500l7 7M14.500 7.500l-7 7"].map((d) => (
              <svg key={d} viewBox="0 0 22 22" className="h-[22px] w-[22px]">
                <circle cx="11" cy="11" r="11" fill="#383838" />
                <path d={d} fill="none" stroke="#fff" strokeWidth="1.200" />
              </svg>
            ))}
          </div>
        </header>
        <div className="flex h-[22px] shrink-0 items-center border-b border-[#cfcbc8] pt-[2px] pl-[10px] leading-[18px]">
          {MENU.map(([a, b, c]) => (
            <span key={a} className={"whitespace-nowrap " + c}>
              <span className="underline underline-offset-2">{a}</span>
              {b}
            </span>
          ))}
        </div>
        <main className="flex h-[1031px] shrink-0">
          <Sidebar />
          <SourcesPanel />
          <Views />
        </main>
        <footer className="flex flex-1 items-center pt-[8px] pl-[2px] leading-[17px]">
          <span className="w-[801px]">No Database</span>
          <span>Offline Mode</span>
        </footer>
      </div>
    </div>
  );
}
